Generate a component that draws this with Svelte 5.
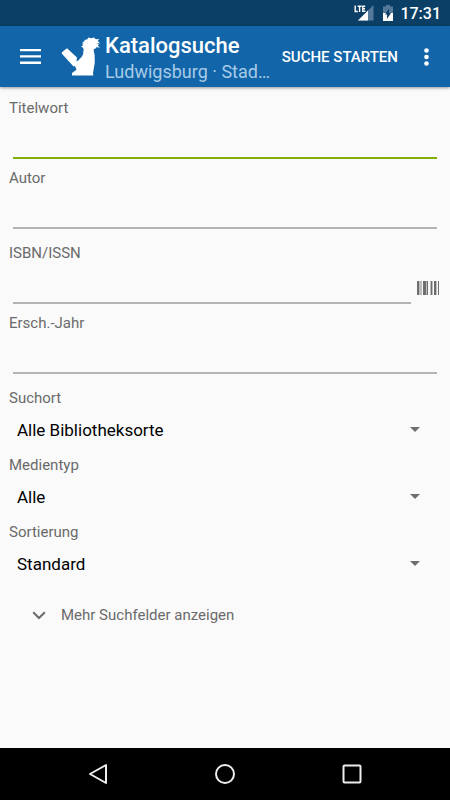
<script>
  let title = $state('')
  let author = $state('')
  let isbn = $state('')
  let year = $state('')
  let expanded = $state(false)

  const selects = [
    { id: 'branch', label: 'Suchort', options: ['Alle Bibliotheksorte'] },
    { id: 'media', label: 'Medientyp', options: ['Alle'] },
    { id: 'order', label: 'Sortierung', options: ['Standard'] }
  ]
</script>

<div class="screen">
  <div class="status">
    <svg width="20" height="16" viewBox="0 0 20 16">
      <path class="dim" d="M19.500 0v15.500H4z" />
      <path d="M14 5.500v10H4z" />
      <path class="shade" d="M0 0h12v8H0z" />
      <path class="lte" d="M1.200 .5v6h2.600M3.600 1.200h4M5.600 1.200v5.800M11.200 1.200H8.800v5.100h2.600M8.800 3.700h2.200" />
    </svg>
    <svg class="battery" width="10" height="16" viewBox="0 0 10 16">
      <path class="dim" d="M3 0h4v1.500h3V8H0V1.500h3z" />
      <path d="M0 8h10v8H0z" />
      <path class="bolt" d="M6 3.500v4.500h2L4 14V9.500H2z" />
    </svg>
    <span>17:31</span>
  </div>

  <header>
    <button class="icon menu" aria-label="Menü">
      <svg width="21" height="15" viewBox="0 0 21 15">
        <path d="M0 0h21v2.300H0zM0 6.300h21v2.300H0zM0 12.600h21V15H0z" />
      </svg>
    </button>
    <svg class="logo" width="39" height="40" viewBox="0 0 39 40">
      <path
        d="M20 9.300l2.800-1.300-2-.8 1.700-1.200-1.300-.8L24 4l-1-1 3-.5L27.500.5l2.500.8L33 .6l1.800 1.600 3.400-.1-1.400 1.700 2.200 2.800-3.500-.5 2.400 1.500-1 1.200 2.100 1.700-3.700-.2-1 1.500-1.500.3v2.500l.8 3 .2 8-1.800 10.500.3 2.400H11v-2.500l4.500-3.200-1.500-3.800-1.500.6L.700 16.500l.5-1.500L6 11.200l10 9.300-.5 3.800 1.500-.5L21 19.500l1.500-3.500-.5-1.500.8-.8-.6-2.700z"
      />
    </svg>
    <div class="heading">
      <h1>Katalogsuche</h1>
      <p>Ludwigsburg · Stad…</p>
    </div>
    <button class="start">Suche starten</button>
    <button class="icon more" aria-label="Weitere Optionen">
      <svg width="5" height="18" viewBox="0 0 5 18">
        <circle cx="2.500" cy="2.500" r="2.300" />
        <circle cx="2.500" cy="9" r="2.300" />
        <circle cx="2.500" cy="15.500" r="2.300" />
      </svg>
    </button>
  </header>

  <main>
    <div class="group">
      <div class="field">
        <label for="title">Titelwort</label>
        <input id="title" class="active" bind:value={title} />
      </div>
      <div class="field">
        <label for="author">Autor</label>
        <input id="author" bind:value={author} />
      </div>
    </div>

    <div class="group">
      <div class="field">
        <label for="isbn">ISBN/ISSN</label>
        <div class="scan-row">
          <input id="isbn" bind:value={isbn} />
          <button class="icon scan" aria-label="Barcode scannen">
            <svg width="22" height="14" viewBox="0 0 22 14">
              <path d="M0 0h2v14H0zM6 0h3v14H6zM10 0h1v14h-1zM14 0h1v14h-1zM17 0h2v14h-2zM21 0h1v14h-1z" />
              <path class="soft" d="M2 0h3v14H2zM9 0h1v14H9zM13 0h1v14h-1zM15 0h1v14h-1zM19 0h1v14h-1z" />
            </svg>
          </button>
        </div>
      </div>
      <div class="field">
        <label for="year">Ersch.-Jahr</label>
        <input id="year" bind:value={year} />
      </div>
    </div>

    {#each selects as s (s.id)}
      <div class="choice">
        <label for={s.id}>{s.label}</label>
        <div class="spinner">
          <select id={s.id}>
            {#each s.options as option}
              <option>{option}</option>
            {/each}
          </select>
          <svg width="10" height="5" viewBox="0 0 10 5"><path d="M0 0h10L5 5z" /></svg>
        </div>
      </div>
    {/each}

    <button class="expand" aria-expanded={expanded} onclick={() => (expanded = !expanded)}>
      <svg width="14" height="9" viewBox="0 0 14 9"><path d="M1.200 1.200L7 7l5.800-5.800" /></svg>
      Mehr Suchfelder anzeigen
    </button>
  </main>

  <nav>
    <button class="icon" aria-label="Zurück">
      <svg width="20" height="22" viewBox="0 0 20 22"><path d="M18 2v18L2 11z" /></svg>
    </button>
    <button class="icon" aria-label="Startbildschirm">
      <svg width="22" height="22" viewBox="0 0 22 22"><circle cx="11" cy="11" r="9" /></svg>
    </button>
    <button class="icon" aria-label="Übersicht">
      <svg width="20" height="20" viewBox="0 0 20 20">
        <rect x="1.500" y="1.500" width="17" height="17" rx="1" />
      </svg>
    </button>
  </nav>
</div>

<style>
  :global(body) {
    margin: 0;
    background: #fafafa;
  }
  .screen {
    min-height: 100vh;
    display: flex;
    flex-direction: column;
    background: #fafafa;
    color: #000;
    font-family: Roboto, sans-serif;
  }
  button {
    border: 0;
    padding: 0;
    background: none;
    color: inherit;
    font: inherit;
    cursor: pointer;
  }
  svg {
    display: block;
    flex: none;
  }
  .icon {
    display: flex;
    align-items: center;
    justify-content: center;
  }
  .status {
    height: 26px;
    padding-right: 9px;
    display: flex;
    align-items: center;
    justify-content: flex-end;
    background: #0b3f66;
    color: #fff;
    font-size: 16px;
    font-weight: 500;
  }
  .status svg {
    fill: #fff;
  }
  .status .dim {
    fill: #54799a;
  }
  .status .lte {
    fill: none;
    stroke: #fff;
    stroke-width: 1.4;
  }
  .status .shade,
  .status .bolt {
    fill: #0b3f66;
  }
  .battery {
    margin: 0 7px 0 9px;
  }
  header {
    height: 61px;
    display: flex;
    align-items: center;
    background: #1165a8;
    color: #fff;
    box-shadow: 0 1px 3px rgba(0, 0, 0, 0.4);
  }
  header svg {
    fill: #fff;
  }
  .menu {
    width: 61px;
    height: 61px;
  }
  .heading {
    flex: 1;
    min-width: 0;
    padding-top: 5px;
    margin-left: 5px;
  }
  h1,
  p {
    margin: 0;
    overflow: hidden;
    text-overflow: ellipsis;
    white-space: nowrap;
    line-height: 26px;
  }
  h1 {
    font-size: 22px;
    font-weight: 500;
  }
  p {
    color: #a8cbe8;
    font-size: 18px;
  }
  .start {
    margin: 0 4px;
    font-size: 15px;
    font-weight: 500;
    text-transform: uppercase;
    white-space: nowrap;
  }
  .more {
    width: 48px;
    height: 61px;
  }
  main {
    flex: 1;
    padding: 11px 9px 0;
  }
  .group {
    display: flex;
    flex-direction: column;
    gap: 9px;
    margin-bottom: 14px;
  }
  .field {
    display: flex;
    flex-direction: column;
  }
  label {
    display: block;
    color: #6a6a6a;
    font-size: 15px;
    line-height: 20px;
  }
  input {
    box-sizing: border-box;
    flex: 1;
    min-width: 0;
    height: 41px;
    margin: 0 4px;
    padding: 8px 4px;
    border: 0;
    border-bottom: 2px solid #b4b4b4;
    border-radius: 0;
    outline: 0;
    background: none;
    font: inherit;
    font-size: 17px;
  }
  .field > input {
    flex: none;
  }
  input:focus,
  .active {
    border-color: #83b000;
  }
  .scan-row {
    display: flex;
  }
  .scan {
    width: 26px;
    padding-top: 8px;
  }
  .scan svg {
    fill: #6e6e6e;
  }
  .scan .soft {
    fill: #bcbcbc;
  }
  .choice {
    margin-bottom: 4px;
  }
  .spinner {
    display: grid;
    align-items: center;
  }
  .spinner > * {
    grid-area: 1 / 1;
  }
  .spinner svg {
    justify-self: end;
    margin-right: 21px;
    fill: #6e6e6e;
    pointer-events: none;
  }
  select {
    width: 100%;
    height: 43px;
    padding: 0 40px 0 8px;
    border: 0;
    background: none;
    color: #000;
    font: inherit;
    font-size: 17px;
    appearance: none;
  }
  .expand {
    width: 100%;
    height: 52px;
    padding-left: 23px;
    display: flex;
    align-items: center;
    gap: 15px;
    color: #6a6a6a;
    font-size: 15px;
  }
  .expand svg,
  nav svg {
    fill: none;
    stroke: #6a6a6a;
    stroke-width: 2;
  }
  nav {
    height: 52px;
    padding: 0 35px;
    display: flex;
    background: #000;
  }
  nav .icon {
    flex: 1;
  }
  nav svg {
    stroke: #eee;
    stroke-linejoin: round;
  }
</style>
